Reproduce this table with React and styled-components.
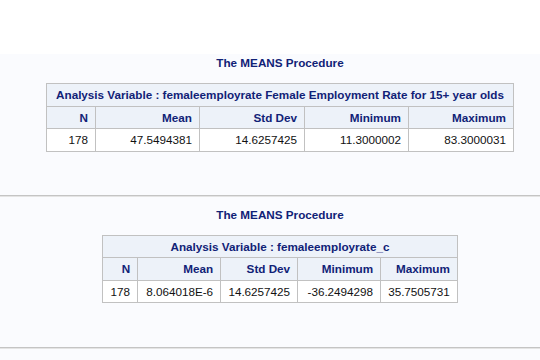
import React from "react";
import styled, { createGlobalStyle } from "styled-components";

const Global = createGlobalStyle`
  html, body { margin: 0; padding: 0; background: #fafbfe; }
  body { font-family: "Liberation Sans", Arial, sans-serif; }
`;

const Page = styled.div`
  width: 540px;
  height: 360px;
  overflow: hidden;
  background: #fafbfe;
`;

const TopBand = styled.div`
  height: 54px;
  background: #ffffff;
`;

const Section = styled.section`
  display: flex;
  flex-direction: column;
  align-items: center;
  padding-left: 20px;
  padding-top: ${(p) => p.$top}px;
  padding-bottom: ${(p) => p.$bottom}px;
`;

const Title = styled.div`
  font-size: 11.7px;
  line-height: 14px;
  font-weight: bold;
  color: #112277;
  margin-bottom: 13px;
`;

const Divider = styled.div`
  height: 0;
  border-top: 1px solid #c4c4c4;
  border-bottom: 1px solid #e4e4e4;
`;

const Table = styled.table`
  border-collapse: collapse;
  border: 1px solid #c1c1c1;
  table-layout: fixed;
  font-family: "Liberation Sans", Arial, sans-serif;
  font-size: 11.7px;
`;

const Th = styled.th`
  background: #edf2f9;
  color: #112277;
  font-weight: bold;
  text-align: ${(p) => (p.$center ? "center" : "right")};
  padding: 4px 7px;
  line-height: 13.5px;
  border: 1px solid #c1c1c1;
  white-space: nowrap;
`;

const Td = styled.td`
  background: #ffffff;
  color: #111111;
  text-align: right;
  padding: 4px 7px;
  line-height: 13.5px;
  border: 1px solid #c1c1c1;
  white-space: nowrap;
`;

const cols = ["N", "Mean", "Std Dev", "Minimum", "Maximum"];

function MeansTable({ label, widths, values }) {
  return (
    <Table>
      <colgroup>
        {widths.map((w, i) => (
          <col key={i} style={{ width: w }} />
        ))}
      </colgroup>
      <thead>
        <tr>
          <Th colSpan={5} $center>
            {label}
          </Th>
        </tr>
        <tr>
          {cols.map((c) => (
            <Th key={c}>{c}</Th>
          ))}
        </tr>
      </thead>
      <tbody>
        <tr>
          {values.map((v, i) => (
            <Td key={i}>{v}</Td>
          ))}
        </tr>
      </tbody>
    </Table>
  );
}

export default function App() {
  return (
    <Page>
      <Global />
      <TopBand />
      <Section $top={2} $bottom={43}>
        <Title>The MEANS Procedure</Title>
        <MeansTable
          label="Analysis Variable : femaleemployrate Female Employment Rate for 15+ year olds"
          widths={[49, 104, 105, 104, 105]}
          values={["178", "47.5494381", "14.6257425", "11.3000002", "83.3000031"]}
        />
      </Section>
      <Divider />
      <Section $top={11} $bottom={44}>
        <Title>The MEANS Procedure</Title>
        <MeansTable
          label="Analysis Variable : femaleemployrate_c"
          widths={[35, 83, 77, 83, 76]}
          values={["178", "8.064018E-6", "14.6257425", "-36.2494298", "35.7505731"]}
        />
      </Section>
      <Divider />
    </Page>
  );
}
